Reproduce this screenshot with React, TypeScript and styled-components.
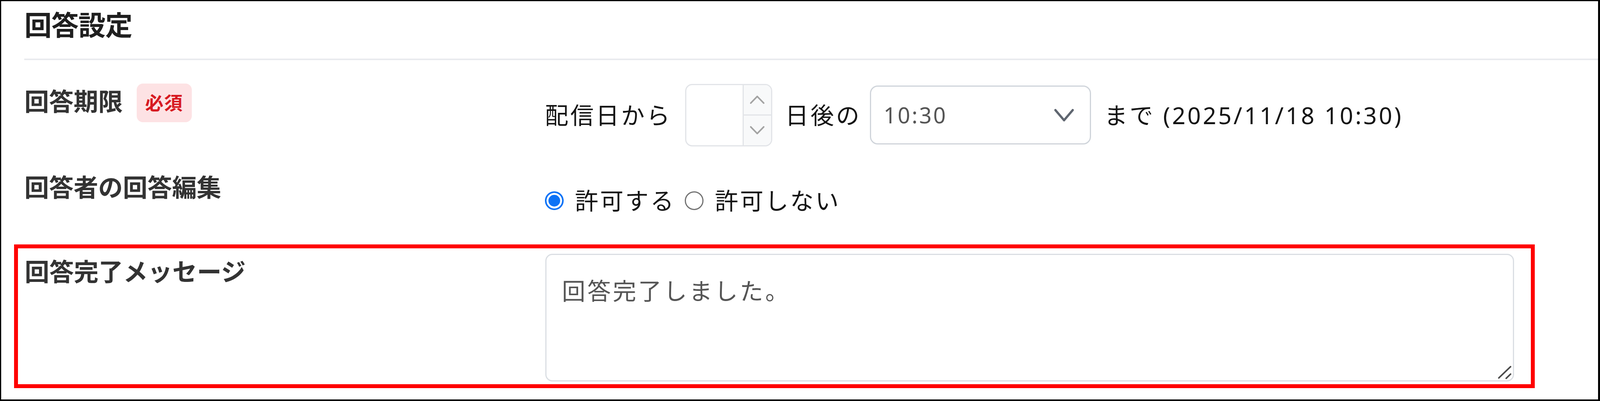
import React from "react";
import styled, { createGlobalStyle } from "styled-components";

/* horizontal unit: reference pixels of a 4408px-wide page, mapped to the viewport width */
const vx = (n: number) => `${((n * 100) / 4408).toFixed(4)}vw`;

const Global = createGlobalStyle`
  html, body { margin: 0; padding: 0; background: #fff; overflow: hidden; }
  body { font-family: "Noto Sans", "Noto Sans CJK JP", sans-serif; }
  *, *::before, *::after { box-sizing: border-box; }
`;

const Frame = styled.div`
  width: 100%;
  height: 1027px;
  border-style: solid;
  border-color: #000;
  border-width: 3px 5px 4px 3px;
  background: #fff;
  display: flex;
  flex-direction: column;
  overflow: hidden;
`;

const Header = styled.header`
  margin-left: ${vx(64)};
  padding: 24px 0 49px;
  border-bottom: 4px solid #e9ebee;
`;

const Title = styled.h2`
  margin: 0;
  font-size: ${vx(75.3)};
  line-height: 74px;
  letter-spacing: ${vx(-1)};
  font-weight: 700;
  color: #1f1f1f;
`;

const Body = styled.div`
  padding-left: ${vx(35)};
  display: flex;
  flex-direction: column;
`;

const FieldGrid = styled.div<{ $top?: number; $indent?: number }>`
  margin-top: ${(p) => p.$top ?? 0}px;
  padding-left: ${(p) => vx(p.$indent ?? 0)};
  display: grid;
  grid-template-columns: ${vx(1434)} minmax(0, 1fr);
  align-items: start;
`;

const LabelCell = styled.div<{ $height?: number; $offset?: number }>`
  display: flex;
  align-items: center;
  gap: ${vx(38)};
  padding-top: ${(p) => p.$offset ?? 0}px;
  ${(p) => (p.$height ? `height: ${p.$height}px;` : "")}
`;

const Label = styled.span<{ $lift?: number }>`
  font-size: ${vx(67.8)};
  line-height: 66px;
  font-weight: 700;
  letter-spacing: 0;
  color: #333;
  white-space: nowrap;
  margin-bottom: ${(p) => (p.$lift ?? 0) * 2}px;
`;

const Badge = styled.span`
  display: inline-flex;
  align-items: center;
  justify-content: center;
  width: ${vx(152)};
  height: 99px;
  border-radius: 16px;
  background: #fde2e4;
  color: #d71a22;
  font-size: ${vx(50.6)};
  font-weight: 700;
  letter-spacing: ${vx(2)};
  line-height: 1;
`;

const Controls = styled.div<{ $height?: number }>`
  display: flex;
  align-items: center;
  gap: ${vx(36)};
  ${(p) => (p.$height ? `height: ${p.$height}px;` : "")}
`;

const Text = styled.span`
  font-size: ${vx(64.6)};
  line-height: 64px;
  letter-spacing: ${vx(5.4)};
  color: #141414;
  white-space: nowrap;
`;

const NumberBox = styled.div`
  width: ${vx(240)};
  height: 160px;
  border: 3px solid #e2e4e8;
  border-radius: 18px;
  display: flex;
  overflow: hidden;
  background: #fff;
  flex: none;
`;

const NumberField = styled.div`
  flex: 1;
`;

const Spinner = styled.div`
  width: ${vx(78)};
  display: flex;
  flex-direction: column;
  background: #f8f9fa;
  border-left: 3px solid #e2e4e8;
`;

const SpinButton = styled.div<{ $first?: boolean }>`
  flex: 1;
  display: flex;
  align-items: center;
  justify-content: center;
  ${(p) => (p.$first ? "border-bottom: 3px solid #e2e4e8;" : "")}
`;

const Select = styled.div`
  width: ${vx(609)};
  height: 151px;
  margin-left: ${vx(-12)};
  border: 3px solid #cfd4da;
  border-radius: 20px;
  display: flex;
  align-items: center;
  justify-content: space-between;
  padding: 0 ${vx(44)} 0 ${vx(34)};
  background: #fff;
  flex: none;
`;

const SelectValue = styled.span`
  font-size: ${vx(60.3)};
  line-height: 1;
  letter-spacing: ${vx(4.3)};
  color: #555;
`;

const RadioGroup = styled.div`
  display: flex;
  align-items: center;
  gap: ${vx(26)};
  height: 64px;
  margin-top: 36px;
`;

const RadioOption = styled.label`
  display: flex;
  align-items: center;
  gap: ${vx(31)};
`;

const RadioText = styled(Text)`
  letter-spacing: ${vx(4.6)};
`;

const RadioDot = styled.span<{ $checked?: boolean }>`
  width: 48px;
  height: 48px;
  border-radius: 50%;
  flex: none;
  ${(p) =>
    p.$checked
      ? `border: 4px solid #0b72f6; background: #0b72f6; box-shadow: inset 0 0 0 5px #fff;`
      : `border: 3px solid #727272; background: #fff;`}
`;

const Highlight = styled.div`
  margin-top: 80px;
  width: ${vx(4190)};
  border: 10px solid #ff0000;
  padding: 14px ${vx(46)} 7px ${vx(19)};
`;

const TextareaWrap = styled.div`
  position: relative;
  width: 100%;
  height: 327px;
`;

const MessageArea = styled.textarea`
  display: block;
  width: 100%;
  height: 100%;
  border: 3px solid #dadee3;
  border-radius: 18px;
  padding: 47px ${vx(43)};
  font-family: inherit;
  font-size: ${vx(64.6)};
  line-height: 1.5;
  letter-spacing: ${vx(5.4)};
  color: #555;
  resize: none;
  outline: none;
  background: #fff;
`;

const Grip = styled.svg`
  position: absolute;
  right: 6px;
  bottom: 6px;
  pointer-events: none;
`;

const ChevronSmall = ({ up }: { up?: boolean }) => (
  <svg width="37" height="21" viewBox="0 0 39 21" preserveAspectRatio="none">
    <polyline
      points={up ? "2,19 19.5,2 37,19" : "2,2 19.5,19 37,2"}
      fill="none"
      stroke="#a3a3a3"
      strokeWidth="4"
      strokeLinecap="round"
      strokeLinejoin="round"
    />
  </svg>
);

const ChevronSelect = () => (
  <svg width="50" height="32" viewBox="0 0 53 32" preserveAspectRatio="none">
    <polyline
      points="3,3 26.5,29 50,3"
      fill="none"
      stroke="#5f6670"
      strokeWidth="6"
      strokeLinecap="round"
      strokeLinejoin="round"
    />
  </svg>
);

export default function App() {
  return (
    <>
      <Global />
      <Frame>
        <Header>
          <Title>回答設定</Title>
        </Header>
        <Body>
          <FieldGrid $top={60} $indent={29}>
            <LabelCell $height={99}>
              <Label $lift={5}>回答期限</Label>
              <Badge>必須</Badge>
            </LabelCell>
            <Controls $height={161}>
              <Text>配信日から</Text>
              <NumberBox>
                <NumberField />
                <Spinner>
                  <SpinButton $first>
                    <ChevronSmall up />
                  </SpinButton>
                  <SpinButton>
                    <ChevronSmall />
                  </SpinButton>
                </Spinner>
              </NumberBox>
              <Text>日後の</Text>
              <Select>
                <SelectValue>10:30</SelectValue>
                <ChevronSelect />
              </Select>
              <Text>まで (2025/11/18 10:30)</Text>
            </Controls>
          </FieldGrid>

          <FieldGrid $top={71} $indent={29}>
            <LabelCell>
              <Label>回答者の回答編集</Label>
            </LabelCell>
            <RadioGroup>
              <RadioOption>
                <RadioDot $checked />
                <RadioText>許可する</RadioText>
              </RadioOption>
              <RadioOption>
                <RadioDot />
                <RadioText>許可しない</RadioText>
              </RadioOption>
            </RadioGroup>
          </FieldGrid>

          <Highlight>
            <FieldGrid>
              <LabelCell $offset={12}>
                <Label>回答完了メッセージ</Label>
              </LabelCell>
              <TextareaWrap>
                <MessageArea defaultValue="回答完了しました。" />
                <Grip width="36" height="35" viewBox="0 0 38 35" preserveAspectRatio="none">
                  <line x1="3" y1="32" x2="35" y2="3" stroke="#4a4a4a" strokeWidth="4" strokeLinecap="round" />
                  <line x1="23" y1="33" x2="35" y2="22" stroke="#4a4a4a" strokeWidth="4" strokeLinecap="round" />
                </Grip>
              </TextareaWrap>
            </FieldGrid>
          </Highlight>
        </Body>
      </Frame>
    </>
  );
}
